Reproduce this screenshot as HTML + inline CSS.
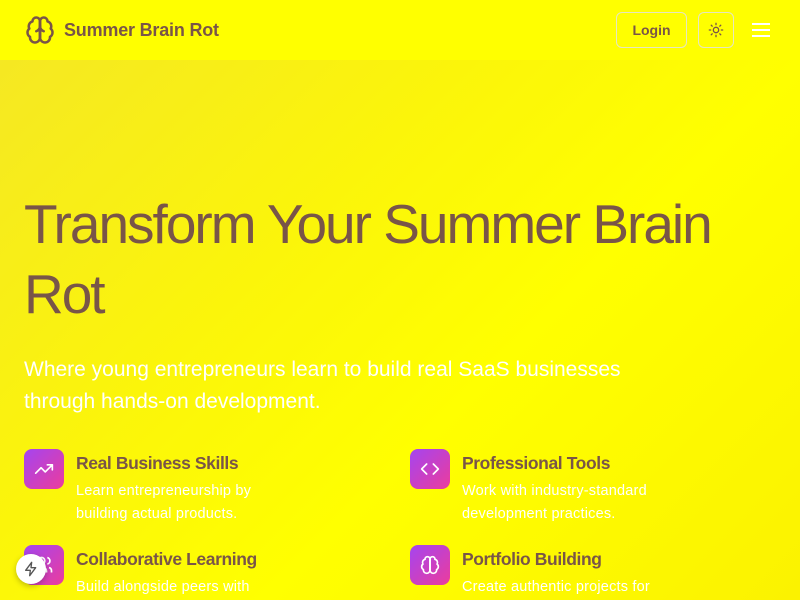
<!DOCTYPE html>
<html><head><meta charset="utf-8"><style>
*{margin:0;padding:0;box-sizing:border-box}
body{width:800px;height:600px;overflow:hidden;font-family:"Liberation Sans",sans-serif;background:#ffff00;position:relative}
header{position:absolute;top:0;left:0;width:800px;height:60px;background:#ffff00;display:flex;align-items:center}
.logo{position:absolute;left:25px;top:14px}
.brand{position:absolute;left:64px;top:20px;font-size:18px;font-weight:bold;color:#795548;letter-spacing:-0.2px}
.login{position:absolute;left:616px;top:12px;width:71px;height:36px;border:1px solid #e6e6c0;border-radius:6px;color:#795548;font-weight:bold;font-size:14px;display:flex;align-items:center;justify-content:center}
.theme{position:absolute;left:698px;top:12px;width:36px;height:36px;border:1px solid #e6e6c0;border-radius:6px;display:flex;align-items:center;justify-content:center}
.menu{position:absolute;left:751px;top:22px}
main{position:absolute;top:60px;left:0;width:800px;height:540px;background:linear-gradient(135deg,#f5e823 0%,#fbf50a 35%,#ffff00 60%,#fbf200 100%)}
h1{position:absolute;left:24px;top:189px;font-size:55px;line-height:70px;font-weight:normal;color:#795548;letter-spacing:-2px;width:720px}
.sub{position:absolute;left:24px;top:354px;font-size:21px;line-height:32px;color:#fff;width:660px}
.f{position:absolute;width:340px}
.ic{position:absolute;left:0;top:0;width:40px;height:40px;border-radius:8px;background:linear-gradient(135deg,#a445f0,#ec3c9c);display:flex;align-items:center;justify-content:center}
.f h3{position:absolute;left:52px;top:4px;font-size:17.5px;color:#795548;white-space:nowrap;letter-spacing:-0.4px}
.f p{position:absolute;left:52px;top:31px;font-size:14.5px;line-height:23px;color:#fff;width:220px;letter-spacing:0.2px}
.bolt{position:absolute;left:16px;top:554px;width:30px;height:30px;border-radius:50%;background:#fff;box-shadow:0 2px 6px rgba(0,0,0,.25);display:flex;align-items:center;justify-content:center}
</style></head><body>
<header>
<svg class="logo" width="30" height="32" viewBox="0 0 24 24" fill="none" stroke="#795548" stroke-width="2" stroke-linecap="round" stroke-linejoin="round"><path d="M12 5a3 3 0 1 0-5.997.125 4 4 0 0 0-2.526 5.770 4 4 0 0 0 .556 6.588A4 4 0 1 0 12 18Z"/><path d="M12 5a3 3 0 1 1 5.997.125 4 4 0 0 1 2.526 5.77 4 4 0 0 1-.556 6.588A4 4 0 1 1 12 18Z"/><path d="M12 5v13"/><path d="M9 13a4.5 4.5 0 0 0 3-4"/><path d="M15 13a4.5 4.5 0 0 1-3-4"/></svg>
<div class="brand">Summer Brain Rot</div>
<div class="login">Login</div>
<div class="theme"><svg width="16" height="16" viewBox="0 0 24 24" fill="none" stroke="#795548" stroke-width="2" stroke-linecap="round"><circle cx="12" cy="12" r="4"/><path d="M12 2v2M12 20v2M4.9 4.9l1.4 1.4M17.7 17.7l1.4 1.4M2 12h2M20 12h2M6.3 17.7l-1.4 1.4M19.1 4.9l-1.4 1.4"/></svg></div>
<svg class="menu" width="20" height="16" viewBox="0 0 20 16" stroke="#fff" stroke-width="2"><path d="M1 2h18M1 8h18M1 14h18"/></svg>
</header>
<main></main>
<h1>Transform Your Summer Brain Rot</h1>
<div class="sub">Where young entrepreneurs learn to build real SaaS businesses through hands-on development.</div>
<div class="f" style="left:24px;top:449px"><div class="ic"><svg width="20" height="20" viewBox="0 0 24 24" fill="none" stroke="#fff" stroke-width="2" stroke-linecap="round" stroke-linejoin="round"><path d="M22 7l-8.5 8.5-5-5L2 17"/><path d="M16 7h6v6"/></svg></div><h3>Real Business Skills</h3><p>Learn entrepreneurship by building actual products.</p></div>
<div class="f" style="left:410px;top:449px"><div class="ic"><svg width="20" height="20" viewBox="0 0 24 24" fill="none" stroke="#fff" stroke-width="2" stroke-linecap="round" stroke-linejoin="round"><path d="M16 18l6-6-6-6M8 6l-6 6 6 6"/></svg></div><h3>Professional Tools</h3><p>Work with industry-standard development practices.</p></div>
<div class="f" style="left:24px;top:545px"><div class="ic"><svg width="20" height="20" viewBox="0 0 24 24" fill="none" stroke="#fff" stroke-width="2"><circle cx="9" cy="7" r="4"/><path d="M3 21v-2a4 4 0 0 1 4-4h4a4 4 0 0 1 4 4v2M16 3.1a4 4 0 0 1 0 7.8M21 21v-2a4 4 0 0 0-3-3.9"/></svg></div><h3>Collaborative Learning</h3><p>Build alongside peers with</p></div>
<div class="f" style="left:410px;top:545px"><div class="ic"><svg width="20" height="20" viewBox="0 0 24 24" fill="none" stroke="#fff" stroke-width="2" stroke-linecap="round"><path d="M12 5a3 3 0 1 0-5.997.125 4 4 0 0 0-2.526 5.77 4 4 0 0 0 .556 6.588A4 4 0 1 0 12 18Z"/><path d="M12 5a3 3 0 1 1 5.997.125 4 4 0 0 1 2.526 5.77 4 4 0 0 1-.556 6.588A4 4 0 1 1 12 18Z"/><path d="M12 5v13"/></svg></div><h3>Portfolio Building</h3><p>Create authentic projects for</p></div>
<div class="bolt"><svg width="16" height="16" viewBox="0 0 24 24" fill="none" stroke="#555" stroke-width="2" stroke-linejoin="round"><path d="M13 2L4 14h7l-1 8 9-12h-7z"/></svg></div>
</body></html>
